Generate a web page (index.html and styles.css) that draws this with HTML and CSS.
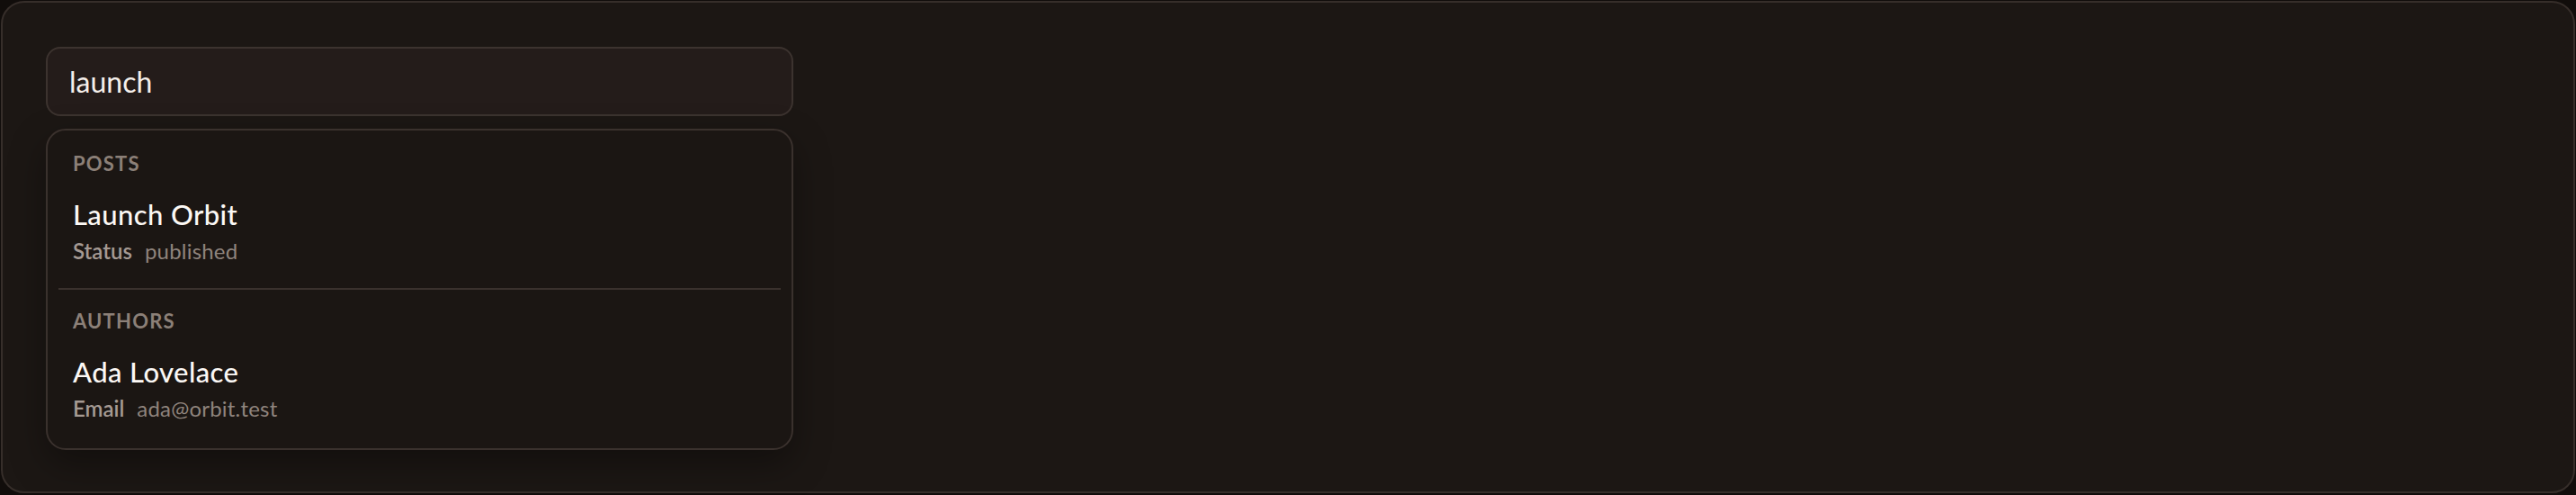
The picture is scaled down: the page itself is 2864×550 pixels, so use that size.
FILE: index.html
```html
<!DOCTYPE html>
<html lang="en">
<head>
<meta charset="utf-8">
<title>Search</title>
<link rel="stylesheet" href="styles.css">
</head>
<body>
<div class="page">
  <div class="frame">
    <div class="search">launch</div>
    <div class="results">
      <div class="group">
        <div class="group-label">POSTS</div>
        <div class="item">
          <div class="item-title">Launch Orbit</div>
          <div class="item-meta"><span class="meta-key">Status</span><span class="meta-val">published</span></div>
        </div>
      </div>
      <div class="divider"></div>
      <div class="group">
        <div class="group-label">AUTHORS</div>
        <div class="item">
          <div class="item-title">Ada Lovelace</div>
          <div class="item-meta"><span class="meta-key">Email</span><span class="meta-val">ada@orbit.test</span></div>
        </div>
      </div>
    </div>
  </div>
</div>
</body>
</html>
```
FILE: styles.css
```css
* { box-sizing: border-box; }
html, body { margin: 0; padding: 0; background: #110d0b; }
body { font-family: "Lato", "Inter", "Liberation Sans", sans-serif; color: #f4efea; }
.page { padding: 1px 1px 2px 1px; }
.frame {
  height: 547px;
  border: 2px solid #362e2a;
  border-radius: 26px;
  background: #1c1714;
  padding: 49px 48px 48px 48px;
}
.search {
  width: 831px;
  height: 77px;
  display: flex;
  align-items: center;
  padding: 0 24px;
  border: 2px solid #3c332f;
  border-radius: 16px;
  background: #241c1a;
  font-size: 32px;
  color: #f4efea;
}
.results {
  width: 831px;
  margin-top: 14px;
  padding: 12px 12px 11px;
  border: 2px solid #3a312d;
  border-radius: 22px;
  background: #1b1613;
  box-shadow: 0 16px 40px rgba(0, 0, 0, 0.35);
}
.group-label {
  padding: 11px 16px 0;
  font-size: 22px;
  line-height: 28px;
  font-weight: 700;
  letter-spacing: 1.2px;
  color: #8c8078;
}
.item { padding: 22px 16px 17px; }
.item-title {
  font-size: 31px;
  line-height: 40px;
  font-weight: 500;
  letter-spacing: 0.4px;
  color: #fbf8f5;
}
.item-meta {
  margin-top: 5px;
  display: flex;
  gap: 14px;
  font-size: 24px;
  line-height: 32px;
}
.meta-key { color: #a59a93; font-weight: 600; }
.meta-val { color: #8f847d; letter-spacing: 0.2px; }
.divider {
  height: 2px;
  margin: 8px 0 10px;
  background: #3a312d;
}
```
